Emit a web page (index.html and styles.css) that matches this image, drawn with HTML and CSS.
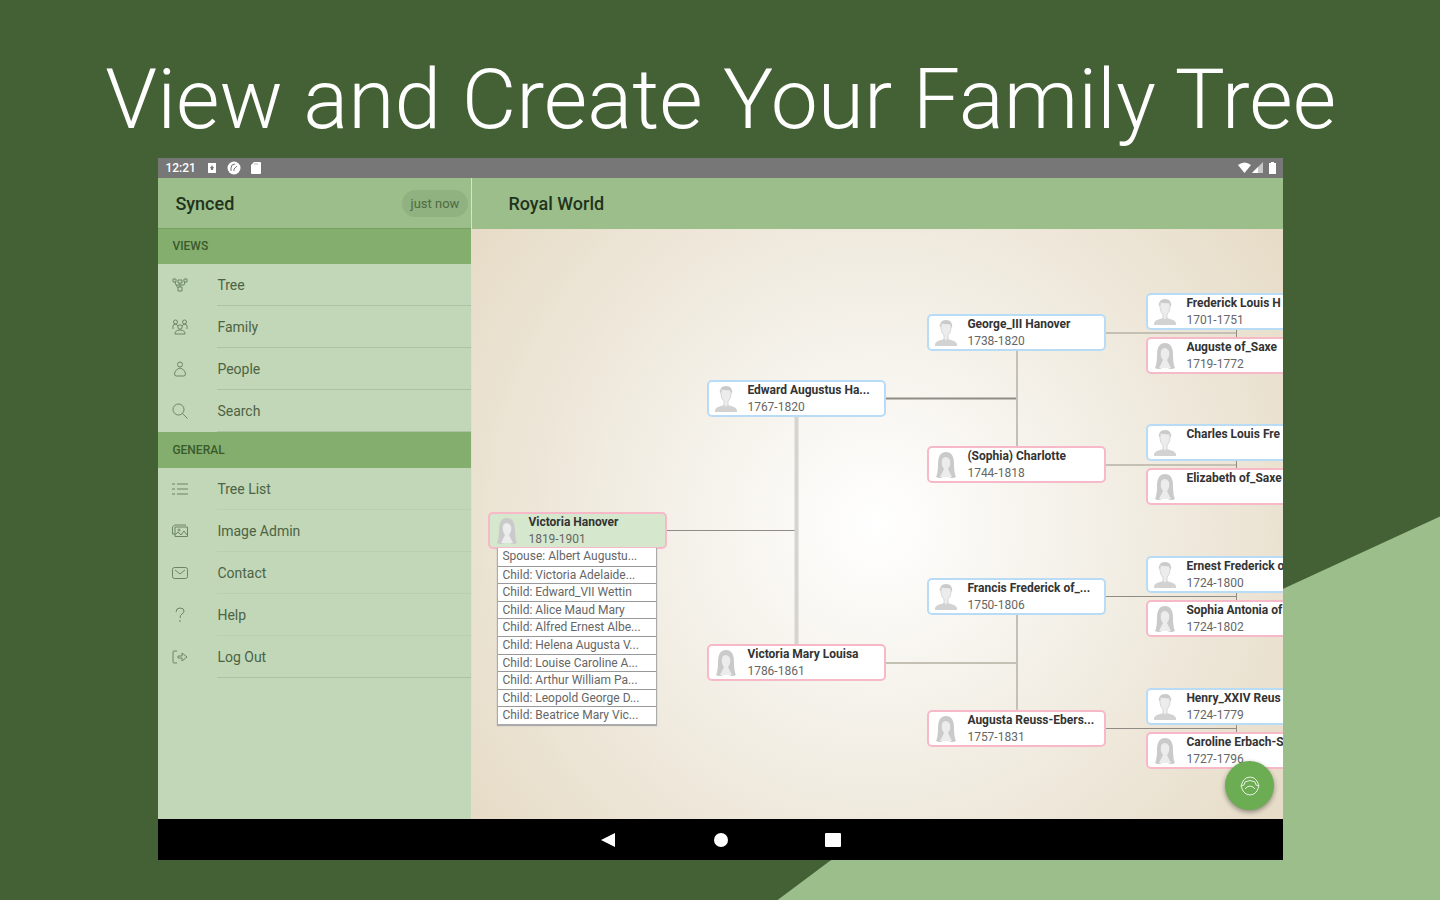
FILE: index.html
```html
<!DOCTYPE html>
<html lang="en">
<head>
    <meta charset="UTF-8">
    <meta name="viewport" content="width=device-width, initial-scale=1.0">
    <title>View and Create Your Family Tree</title>
    <link rel="stylesheet" href="styles.css">
</head>
<body>

<svg class="symbols" width="0" height="0">
    <symbol id="man" viewBox="0 0 24 28">
        <path d="M1 27v-2q1-3 6-4l3-1h4l3 1q5 1 6 4v2z" fill="#d2d2d2"/>
        <path d="M7 7q0 7 3 9v4l2 2 2-2v-4q3-2 3-9-1-4-5-4-4 0-5 4z" fill="#ececec" stroke="#d6d6d6"/>
        <path d="M6 9q-1-8 6-8 7 0 6 8l-2-4q-5 1-8-1z" fill="#cacaca"/>
    </symbol>
    <symbol id="woman" viewBox="0 0 24 28">
        <path d="M2 26q2-4 2-13Q4 1 12 1q8 0 8 12 0 9 2 13-4 2-7 0H9q-3 2-7 0z" fill="#cacaca"/>
        <path d="M8 9q-1 6 2 9l-4 8h12l-4-8q3-3 2-9-2-3-4-3-3 0-4 3z" fill="#ececec"/>
    </symbol>
</svg>

<div class="page">
    <h1>View and Create Your Family Tree</h1>

    <div class="tablet">
        <div class="status-bar">
            <span class="clock">12:21</span>
            <svg width="12" height="12" viewBox="0 0 12 12"><path d="M2 1h8v10H2z" fill="#fff"/><path d="M6 3l1 2h1L7 7v1H5V7L4 5h1z" fill="#777"/></svg>
            <svg width="14" height="14" viewBox="0 0 14 14"><circle cx="7" cy="7" r="6.500" fill="#fff"/><path d="M4 10V7q0-4 4-4M7 10V8l3-3" fill="none" stroke="#777"/></svg>
            <svg width="12" height="14" viewBox="0 0 12 14"><path d="M4 1h6q1 0 1 1v10q0 1-1 1H2q-1 0-1-1V4z" fill="#fff"/><path d="M5 2v2M7 2v2" stroke="#bbb"/></svg>
            <span class="spacer"></span>
            <svg width="40" height="14" viewBox="0 0 40 14"><path d="M0 4q6.500-5 13 0L6.500 12z" fill="#fff"/><path d="M14 12L25 1v11z" fill="#c8c8c8"/><path d="M14 12l6-6v6z" fill="#fff"/><path d="M31 2h2V1h3v1h2v11h-7z" fill="#fff"/></svg>
        </div>

        <div class="app">
            <aside class="sidebar">
                <header class="toolbar">
                    <h2>Synced</h2>
                    <span class="chip">just now</span>
                </header>
                <nav>
                    <h3>VIEWS</h3>
                    <a href="#tree"><svg viewBox="0 0 16 16"><path d="M1 2h3v3H1zM12 2h3v3h-3zM6 3h4v3H6zM3 5l1 3h8l1-3M8 6v4M6 10h4v4H6zM4 8l2 3"/></svg><span>Tree</span></a>
                    <a href="#family"><svg viewBox="0 0 16 16"><circle cx="3.500" cy="3" r="2"/><circle cx="12.500" cy="3" r="2"/><circle cx="8" cy="8" r="2.200"/><path d="M1 10V7q0-2 3-2l2 2M15 10V7q0-2-3-2l-2 2M3 15q0-4 5-4t5 4z"/></svg><span>Family</span></a>
                    <a href="#people"><svg viewBox="0 0 16 16"><circle cx="8" cy="3.500" r="2.500"/><path d="M5.500 8q-3 2-3 5 0 2 2 2h7q2 0 2-2 0-3-3-5-2.500-2-5 0z"/></svg><span>People</span></a>
                    <a href="#search"><svg viewBox="0 0 16 16"><circle cx="6.500" cy="6.500" r="5.500"/><path d="M10.500 10.500L15.500 15.500"/></svg><span>Search</span></a>
                    <h3 class="general">GENERAL</h3>
                    <a href="#tree-list" class="soft"><svg viewBox="0 0 16 16"><path d="M5 3h11M5 8h11M5 13h11M0 3h3M0 8h3M0 13h3"/></svg><span>Tree List</span></a>
                    <a href="#image-admin" class="soft"><svg viewBox="0 0 16 16"><path d="M3 4h12.500v9.500H3zM3 11H.5V4l2-2H14M3 12l3-3 3 3 3-4 3 4"/><circle cx="7" cy="7" r="1"/></svg><span>Image Admin</span></a>
                    <a href="#contact" class="soft"><svg viewBox="0 0 16 16"><rect x=".5" y="2.500" width="15" height="11" rx="2"/><path d="M3 5l5 4 5-4"/></svg><span>Contact</span></a>
                    <a href="#help" class="soft"><svg viewBox="0 0 16 16"><path d="M4 5q0-4 4-4t4 3q0 2-2 3-2 1-2 4M8 13v2"/></svg><span>Help</span></a>
                    <a href="#log-out"><svg viewBox="0 0 16 16"><path d="M5 2H2Q1 2 1 3v10q0 1 1 1h3M6 7h4V4l5 4-5 4V9H6z"/></svg><span>Log Out</span></a>
                </nav>
            </aside>

            <main>
                <header class="toolbar">
                    <h2>Royal World</h2>
                </header>
                <div class="canvas">
                    <svg class="links" width="980" height="590">
                        <g fill="none" stroke="#8f8c86">
                            <path d="M193 301.500H325"/>
                            <path d="M413 169.500H545" stroke-width="2"/>
                        </g>
                        <path d="M324.500 187V415" stroke="#d6d4ce" stroke-width="4"/>
                        <g fill="none" stroke="#c4c0b4" stroke-width="2">
                            <path d="M413 434H545M545 121V217M545 385V481"/>
                            <path d="M633 104H764M633 236H764"/>
                        </g>
                        <g fill="none" stroke="#8f8c86">
                            <path d="M633 367.500H764M633 499.500H764"/>
                            <path d="M764.500 98v10M764.500 230v10M764.500 362v10M764.500 494v10"/>
                        </g>
                    </svg>

                    <div class="person female root">
                        <svg><use href="#woman"/></svg>
                        <div><strong>Victoria Hanover</strong><span>1819-1901</span></div>
                    </div>
                    <ul class="relatives">
                        <li>Spouse: Albert Augustu...</li>
                        <li>Child: Victoria Adelaide...</li>
                        <li>Child: Edward_VII Wettin</li>
                        <li>Child: Alice Maud Mary</li>
                        <li>Child: Alfred Ernest Albe...</li>
                        <li>Child: Helena Augusta V...</li>
                        <li>Child: Louise Caroline A...</li>
                        <li>Child: Arthur William Pa...</li>
                        <li>Child: Leopold George D...</li>
                        <li>Child: Beatrice Mary Vic...</li>
                    </ul>

                    <div class="person male gen-1 row-3">
                        <svg><use href="#man"/></svg>
                        <div><strong>Edward Augustus Ha...</strong><span>1767-1820</span></div>
                    </div>
                    <div class="person female gen-1 row-9">
                        <svg><use href="#woman"/></svg>
                        <div><strong>Victoria Mary Louisa</strong><span>1786-1861</span></div>
                    </div>

                    <div class="person male gen-2 row-2">
                        <svg><use href="#man"/></svg>
                        <div><strong>George_III Hanover</strong><span>1738-1820</span></div>
                    </div>
                    <div class="person female gen-2 row-5">
                        <svg><use href="#woman"/></svg>
                        <div><strong>(Sophia) Charlotte</strong><span>1744-1818</span></div>
                    </div>
                    <div class="person male gen-2 row-8">
                        <svg><use href="#man"/></svg>
                        <div><strong>Francis Frederick of_...</strong><span>1750-1806</span></div>
                    </div>
                    <div class="person female gen-2 row-11">
                        <svg><use href="#woman"/></svg>
                        <div><strong>Augusta Reuss-Ebers...</strong><span>1757-1831</span></div>
                    </div>

                    <div class="couple row-1">
                        <div class="person male">
                            <svg><use href="#man"/></svg>
                            <div><strong>Frederick Louis H</strong><span>1701-1751</span></div>
                        </div>
                        <div class="person female">
                            <svg><use href="#woman"/></svg>
                            <div><strong>Auguste of_Saxe</strong><span>1719-1772</span></div>
                        </div>
                    </div>
                    <div class="couple row-4">
                        <div class="person male">
                            <svg><use href="#man"/></svg>
                            <div><strong>Charles Louis Fre</strong></div>
                        </div>
                        <div class="person female">
                            <svg><use href="#woman"/></svg>
                            <div><strong>Elizabeth of_Saxe</strong></div>
                        </div>
                    </div>
                    <div class="couple row-7">
                        <div class="person male">
                            <svg><use href="#man"/></svg>
                            <div><strong>Ernest Frederick o</strong><span>1724-1800</span></div>
                        </div>
                        <div class="person female">
                            <svg><use href="#woman"/></svg>
                            <div><strong>Sophia Antonia of</strong><span>1724-1802</span></div>
                        </div>
                    </div>
                    <div class="couple row-10">
                        <div class="person male">
                            <svg><use href="#man"/></svg>
                            <div><strong>Henry_XXIV Reus</strong><span>1724-1779</span></div>
                        </div>
                        <div class="person female">
                            <svg><use href="#woman"/></svg>
                            <div><strong>Caroline Erbach-S</strong><span>1727-1796</span></div>
                        </div>
                    </div>

                    <button class="fab" type="button" aria-label="Show options">
                        <svg width="22" height="22" viewBox="0 0 22 22"><path d="M11 2l4 1 3 3 2 5-2 5-3 3-4 1-4-1-3-3-2-5 2-5 3-3z"/><path d="M2 11l3-1 1-3q5-3 10 0l1 3 3 1M6 14l2-2q3-2 6 0l2 2"/></svg>
                    </button>
                </div>
            </main>
        </div>

        <div class="nav-bar">
            <button type="button" aria-label="Back"><svg width="16" height="16" viewBox="0 0 16 16"><path d="M0 8l14-7v14z"/></svg></button>
            <button type="button" aria-label="Home"><svg width="16" height="16" viewBox="0 0 16 16"><circle cx="8" cy="8" r="7"/></svg></button>
            <button type="button" aria-label="Recent apps"><svg width="16" height="16" viewBox="0 0 16 16"><rect y="1" width="16" height="14" rx="1"/></svg></button>
        </div>
    </div>
</div>

</body>
</html>
```
FILE: styles.css
```css
* {
    box-sizing: border-box;
}
body {
    margin: 0;
    font-family: Roboto, sans-serif;
    background-color: #446136;
}
.symbols {
    position: absolute;
}
.page {
    display: flex;
    flex-direction: column;
    min-height: 100vh;
    padding: 42px 10.9% 40px 11%;
    background-color: #446136;
    position: relative;
    overflow: hidden;
}
.page::before {
    content: "";
    position: absolute;
    inset: 0;
    background-color: #9cbe8b;
    clip-path: polygon(100% 57.4%, 89% 65.5%, 57.6% 95.7%, 54% 100%, 100% 100%);
}
h1 {
    margin: 0 -100px;
    height: 116px;
    line-height: 116px;
    font-size: 84px;
    font-weight: 300;
    text-align: center;
    white-space: nowrap;
    color: #fff;
    position: relative;
}
.tablet {
    display: flex;
    flex-direction: column;
    flex: 1;
    position: relative;
}
.status-bar {
    display: flex;
    align-items: center;
    gap: 9px;
    height: 20px;
    padding: 0 5px 0 7px;
    background-color: #777;
    color: #fff;
}
.clock {
    font-size: 12px;
    font-weight: 500;
    margin-right: 1px;
}
.spacer {
    flex: 1;
}
.app {
    display: flex;
    flex: 1;
}
.sidebar {
    width: 314px;
    background-color: #c1d7b8;
    border-right: 1px solid #d5e4ce;
}
.toolbar {
    display: flex;
    align-items: center;
    justify-content: space-between;
    height: 51px;
    background-color: #9cbe8b;
}
.toolbar h2 {
    margin: 0;
    font-size: 18px;
    font-weight: 500;
    color: #22331c;
}
.sidebar .toolbar {
    padding: 0 3px 0 17px;
    border-bottom: 1px solid #76a061;
}
.chip {
    padding: 0 9px;
    height: 27px;
    line-height: 27px;
    border-radius: 14px;
    font-size: 13px;
    background-color: #90b180;
    color: #4e6b42;
}
nav h3 {
    margin: 0;
    height: 35px;
    padding-left: 14px;
    line-height: 35px;
    font-size: 12px;
    font-weight: 500;
    background-color: #83ae6e;
    color: #3a5a2c;
}
nav h3.general {
    height: 36px;
    line-height: 37px;
}
nav a {
    display: flex;
    align-items: center;
    gap: 29px;
    height: 42px;
    padding-left: 14px;
    font-size: 14px;
    text-decoration: none;
    color: #4d6343;
}
nav a svg {
    width: 16px;
    height: 16px;
    fill: none;
    stroke: #6c8562;
}
nav a span {
    flex: 1;
    height: 42px;
    line-height: 43px;
    border-bottom: 1px solid #adc4a4;
}
nav a.soft span {
    border-color: #b9cfb0;
}
main {
    display: flex;
    flex-direction: column;
    flex: 1;
    min-width: 0;
}
main .toolbar {
    padding-left: 36px;
}
.canvas {
    flex: 1;
    min-height: 590px;
    position: relative;
    overflow: hidden;
    background: radial-gradient(circle, #fff, #f3efe6 45%, #e6dbc6);
}
.links {
    position: absolute;
    left: 0;
    top: 0;
}

/* tree cards */
.person {
    display: flex;
    gap: 9px;
    width: 179px;
    height: 37px;
    padding: 1px 0 0 5px;
    border: 2px solid;
    border-radius: 5px;
    background-color: #fff;
}
.canvas > .person,
.couple {
    position: absolute;
}
.male {
    border-color: #b9dcf6;
}
.female {
    border-color: #f7b9c7;
}
.person svg {
    width: 24px;
    height: 28px;
    margin-top: 2px;
}
.person strong,
.person span {
    display: block;
    white-space: nowrap;
    font-size: 12px;
}
.person strong {
    line-height: 14px;
    color: #333;
}
.person span {
    line-height: 20px;
    color: #666;
}
.root {
    left: 16px;
    top: 283px;
}
.person.root {
    background-color: #d5e7cd;
}
.couple {
    display: flex;
    flex-direction: column;
    gap: 7px;
    left: 674px;
}
.gen-1 { left: 235px; }
.gen-2 { left: 455px; }
.row-1 { top: 64px; }
.row-2 { top: 85px; }
.row-3 { top: 151px; }
.row-4 { top: 195px; }
.row-5 { top: 217px; }
.row-7 { top: 327px; }
.row-8 { top: 349px; }
.row-9 { top: 415px; }
.row-10 { top: 459px; }
.row-11 { top: 481px; }

.relatives {
    display: grid;
    grid-template-rows: repeat(10, minmax(0, 1fr));
    position: absolute;
    left: 25px;
    top: 319px;
    width: 160px;
    height: 177px;
    margin: 0;
    padding: 0;
    list-style: none;
    border: 1px solid #aaa;
    border-top: none;
    background-color: #fff;
    box-shadow: 0 1px 1px #aaa;
}
.relatives li {
    padding-left: 4px;
    line-height: 16px;
    font-size: 12px;
    white-space: nowrap;
    color: #666;
}
.relatives li + li {
    border-top: 1px solid #999;
}
.fab {
    display: flex;
    align-items: center;
    justify-content: center;
    position: absolute;
    right: 9px;
    bottom: 9px;
    width: 49px;
    height: 49px;
    padding: 0;
    border: none;
    border-radius: 50%;
    background-color: #6cad54;
    box-shadow: 0 2px 5px rgba(0, 0, 0, 0.4);
}
.fab svg {
    fill: none;
    stroke: #e4f1df;
}
.nav-bar {
    display: flex;
    align-items: center;
    justify-content: center;
    gap: 80px;
    height: 41px;
    background-color: #000;
}
.nav-bar button {
    width: 32px;
    height: 32px;
    padding: 8px;
    border: none;
    background: none;
}
.nav-bar svg {
    display: block;
    fill: #fff;
}
```
